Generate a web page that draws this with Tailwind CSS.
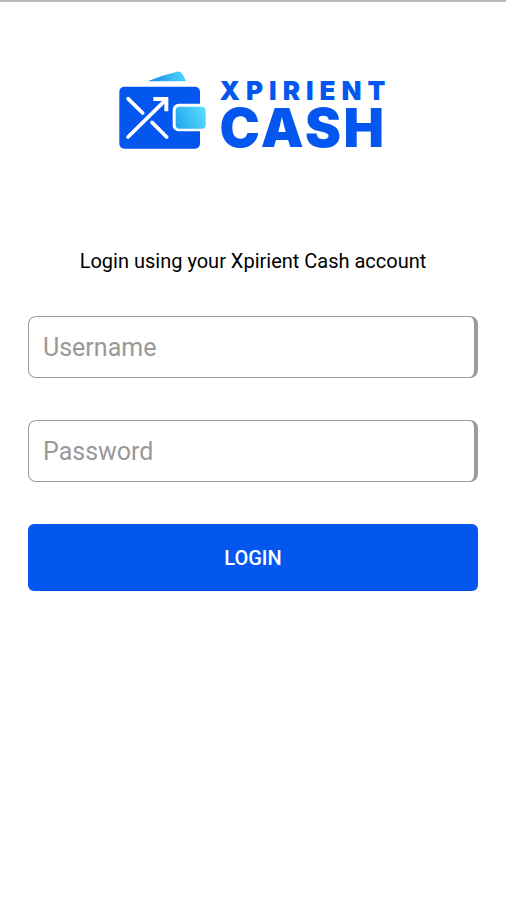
<!DOCTYPE html>
<html lang="en">
<head>
<meta charset="utf-8">
<meta name="viewport" content="width=device-width, initial-scale=1">
<title>Xpirient Cash</title>
<script src="https://cdn.jsdelivr.net/npm/@tailwindcss/browser@4"></script>
</head>
<body class="min-h-screen border-t-2 border-[#b9b9b9] bg-white font-['Roboto',sans-serif] text-black">
<main class="px-7 pt-17">
  <h1 class="flex h-20 items-start justify-center gap-3.5 pl-1">
    <svg class="h-20 w-[87px] shrink-0" viewBox="27 30 261 240" fill="none" aria-hidden="true">
      <defs>
        <linearGradient id="note" x1="115" y1="60" x2="228" y2="45" gradientUnits="userSpaceOnUse"><stop stop-color="#1687e8"/><stop offset="1" stop-color="#4fd9ff"/></linearGradient>
        <linearGradient id="clasp" x1="198" y1="190" x2="285" y2="150" gradientUnits="userSpaceOnUse"><stop stop-color="#21a9ee"/><stop offset="1" stop-color="#5bdcff"/></linearGradient>
      </defs>
      <path d="M113 64 L155 48 L201 35 Q211 33 217 42 L229 64 Z" fill="url(#note)"/>
      <rect x="28" y="80" width="242" height="186" rx="15" fill="#0457ee"/>
      <rect x="188" y="131" width="108" height="83" rx="18" fill="#fff"/>
      <rect x="197" y="140" width="90" height="66" rx="12" fill="url(#clasp)"/>
      <path d="M54 116 L98 159 M126 187 L170 231" stroke="#fff" stroke-width="11" stroke-linecap="round"/>
      <path d="M54 231 L168 119" stroke="#fff" stroke-width="11" stroke-linecap="round"/>
      <path d="M130 117 H169 V154" stroke="#fff" stroke-width="12"/>
    </svg>
    <span class="flex flex-col pt-2 font-['Inter',sans-serif] text-[#0457ee]">
      <span class="text-[26px] leading-[26px] font-black tracking-[6px]">XPIRIENT</span>
      <span class="text-[54px] leading-[48px] font-black tracking-wider">CASH</span>
    </span>
  </h1>
  <form>
    <p class="pt-24 text-center text-xl leading-[30px]">Login using your Xpirient Cash account</p>
    <div class="mt-10 flex flex-col gap-[42px]">
      <input type="text" aria-label="Username" placeholder="Username" class="h-[62px] w-full rounded-lg border border-r-4 border-[#9c9c9c] px-3.5 text-[25px] outline-none placeholder:text-[#999]">
      <input type="password" aria-label="Password" placeholder="Password" class="h-[62px] w-full rounded-lg border border-r-4 border-[#9c9c9c] px-3.5 text-[25px] outline-none placeholder:text-[#999]">
      <button type="submit" class="h-[67px] w-full rounded-md bg-[#0457ee] text-xl font-medium text-white">LOGIN</button>
    </div>
  </form>
</main>
</body>
</html>
